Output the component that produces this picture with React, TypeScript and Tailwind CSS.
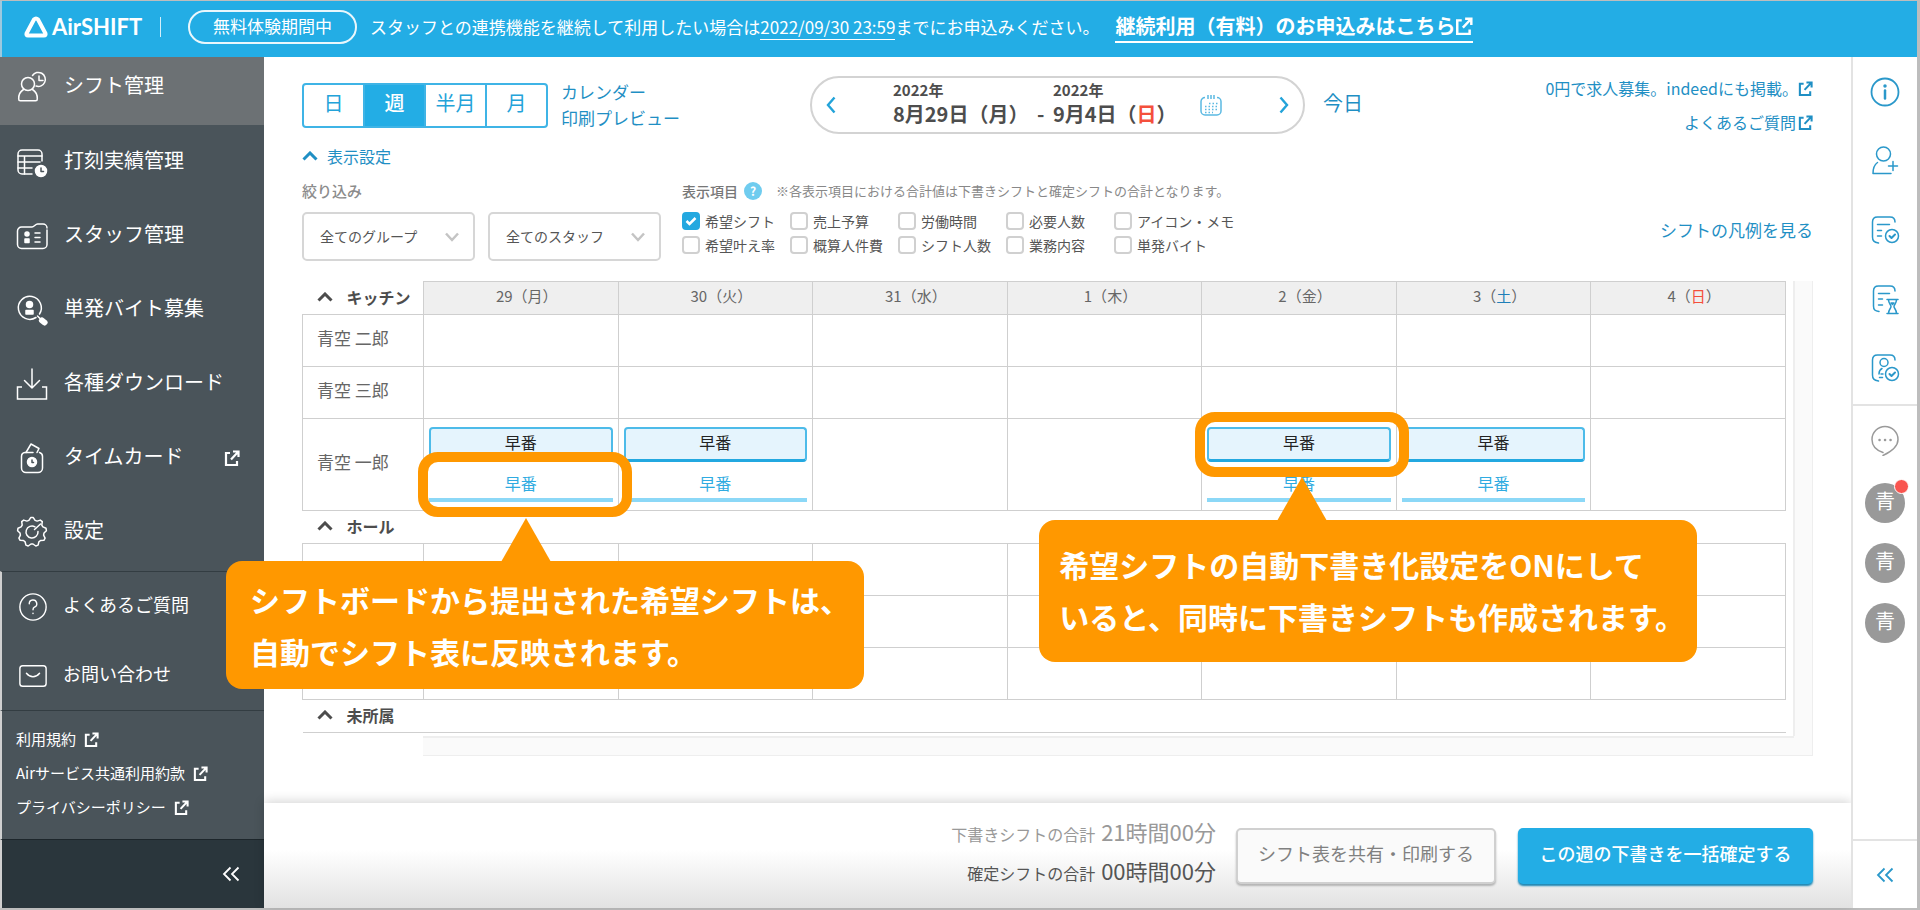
import { ReactNode } from 'react';

interface IconProps {
  className?: string;
}

interface SvgProps extends IconProps {
  children: ReactNode;
  size?: number;
}

function Svg({ children, className = '', size = 32 }: SvgProps) {
  return (
    <svg
      width={size}
      height={size}
      viewBox="0 0 32 32"
      fill="none"
      stroke="currentColor"
      strokeWidth="1.5"
      strokeLinecap="round"
      strokeLinejoin="round"
      className={`shrink-0 ${className}`}
      aria-hidden="true"
    >
      {children}
    </svg>
  );
}

function ExternalIcon({ className = '' }: IconProps) {
  return (
    <svg
      viewBox="0 0 16 16"
      fill="none"
      stroke="currentColor"
      strokeWidth="2.2"
      className={`shrink-0 ${className}`}
      aria-hidden="true"
    >
      <path d="M6 3H2v12h11v-4" />
      <path d="M9 1.5h5.5V7M14 2L7 9.500" />
    </svg>
  );
}

function ChevronUp({ className = '' }: IconProps) {
  return (
    <svg viewBox="0 0 16 10" fill="none" stroke="currentColor" strokeWidth="3" className={className} aria-hidden="true">
      <path d="M1.5 8.5L8 2l6.500 6.500" />
    </svg>
  );
}

function DoubleChevron({ className = '' }: IconProps) {
  return (
    <svg
      width="18"
      height="16"
      viewBox="0 0 18 16"
      fill="none"
      stroke="currentColor"
      strokeWidth="1.8"
      className={className}
      aria-hidden="true"
    >
      <path d="M8.500 1.500L2 8l6.500 6.500M16.500 1.500L10 8l6.500 6.500" />
    </svg>
  );
}

const ShiftIcon = () => (
  <Svg>
    <circle cx="12" cy="13" r="6.500" />
    <path d="M7.500 18.500c-4 2.500-5 6-4.800 9.500 0 1.200.5 1.800 1.600 1.800h15.400c1.100 0 1.600-.6 1.600-1.800.2-3.500-.8-7-4.800-9.500" />
    <path d="M16.500 4.500A7 7 0 1 1 20 15" />
    <path d="M23 5v4.500h4" />
  </Svg>
);

const RecordIcon = () => (
  <Svg>
    <path d="M16 28H6a4 4 0 0 1-4-4V8a4 4 0 0 1 4-4h16a4 4 0 0 1 4 4v7" />
    <path d="M2 10h24M2 16h22M2 22h14M8.500 10v18" />
    <circle cx="25" cy="25" r="5.500" fill="currentColor" />
    <path d="M25 22v3.500h2.500" stroke="#4a545a" />
  </Svg>
);

const StaffIcon = () => (
  <Svg>
    <path d="M31 10v14.500a4 4 0 0 1-4 4H5.500a4 4 0 0 1-4-4V11a4 4 0 0 1 4-4H16c2 0 3.500-3 5.500-3H27a4 4 0 0 1 4 4" />
    <circle cx="11" cy="14" r="2" fill="currentColor" />
    <path d="M9 19h4v3.500H9z" fill="currentColor" />
    <path d="M19 13h5M19 17.500h5M19 22h5" />
  </Svg>
);

const RecruitIcon = () => (
  <Svg>
    <path d="M20 23.500A11.500 11.500 0 1 1 23.500 20" />
    <circle cx="13.500" cy="10.500" r="3" fill="currentColor" />
    <path d="M10 16.500h7V20h-7z" fill="currentColor" />
    <path d="M21.500 22l3 3" />
    <path d="M26 26.500l2.500 2" strokeWidth="6" />
  </Svg>
);

const DownloadIcon = () => (
  <Svg>
    <path d="M16 1v19M8.500 12.500L16 20l7.500-7.500" />
    <path d="M6 19H1.500v12h29V19H26" strokeLinecap="butt" strokeLinejoin="miter" />
  </Svg>
);

const TimecardIcon = () => (
  <Svg>
    <path d="M17 10.500H9a4 4 0 0 0-3.500 4V26a4.500 4.500 0 0 0 4.500 4.500h12a4.500 4.500 0 0 0 4.500-4.500V14.500a4 4 0 0 0-3-4" />
    <path d="M10 10.500l5-8.500 8 4.500-2 4" />
    <circle cx="16" cy="20" r="4.500" fill="currentColor" />
    <path d="M16 18v2.500h1.500" stroke="#4a545a" />
  </Svg>
);

const gearTeeth = 9;
const gearPath =
  Array.from({ length: gearTeeth * 4 }, (_, i) => {
    const angle = ((i - 0.5) / (gearTeeth * 4)) * Math.PI * 2 - Math.PI / 2;
    const radius = i % 4 < 2 ? 14.5 : 12;
    const x = 16 + radius * Math.cos(angle);
    const y = 16 + radius * Math.sin(angle);
    return `${i === 0 ? 'M' : 'L'}${x.toFixed(1)} ${y.toFixed(1)}`;
  }).join('') + 'Z';

const SettingsIcon = () => (
  <Svg>
    <path d={gearPath} />
    <path d="M19 10.800a6 6 0 1 0 3 4.700" />
    <path d="M18.500 13.500L24.500 8" />
  </Svg>
);

const HelpIcon = () => (
  <Svg size={30}>
    <circle cx="16" cy="16" r="14" />
    <path d="M12 12.500a4 4 0 1 1 5.500 3.700c-1 .5-1.500 1-1.500 2.800M16 22.500v.5" />
  </Svg>
);

const MailIcon = () => (
  <Svg size={30}>
    <rect x="2" y="5" width="28" height="22" rx="3" />
    <path d="M9 13c4 5 10 5 14 0" />
  </Svg>
);

const InfoIcon = () => (
  <Svg>
    <circle cx="16" cy="16" r="13.500" strokeWidth="1.800" />
    <path d="M16 14.500v8" strokeWidth="2.500" />
    <circle cx="16" cy="10" r="1" fill="currentColor" />
  </Svg>
);

const AddUserIcon = () => (
  <Svg>
    <circle cx="14.500" cy="9" r="7" />
    <path d="M8.500 17.500C5 20 4 24 4 28.500h18M24 16.500v9M19.500 21h9" />
  </Svg>
);

const CheckBadge = () => (
  <>
    <circle cx="23" cy="22" r="6.500" />
    <path d="M20.500 22l2 2 3.500-3.500" strokeWidth="2" />
  </>
);

const DocCheckIcon = () => (
  <Svg>
    <path d="M9.500 29C5 28 3.500 27 3.500 23V8c0-3 2-5 5-5H21c3 0 5 2 5 5" />
    <path d="M8.500 10.500h12M8.500 16.500h4M8.500 22h4" />
    <CheckBadge />
  </Svg>
);

const DocWaitIcon = () => (
  <Svg>
    <path d="M10 28.500C6 28 4.500 27 4.500 23V8c0-3 2-5 5-5H21c3 0 5 2 5 5" />
    <path d="M9.500 10.500h11M9.500 16h4M9.500 22h4" />
    <path d="M18 16.500h11M18 30.500h11M19.500 16.500c0 4 2.500 5 2.500 7s-2.500 3-2.500 7M27.500 16.500c0 4-2.500 5-2.500 7s2.500 3 2.500 7" />
    <path d="M22 20h3l-1.500 1.500z" fill="currentColor" />
  </Svg>
);

const PersonCheckIcon = () => (
  <Svg>
    <path d="M9.500 29C5 28 3.500 27 3.500 23V8c0-3 2-5 5-5H21c3 0 5 2 5 5" />
    <circle cx="15" cy="10.500" r="4" />
    <path d="M13 16.500c-2 1-3 3-3 5.500M10.500 25.500h3M12 22h2" />
    <CheckBadge />
  </Svg>
);

const ChatIcon = () => (
  <Svg>
    <path d="M14 28.500C5 25.500 3 20 3 15.500a13 13 0 0 1 26 0c0 8-7.500 12.500-15 16" />
    <path d="M10.500 16h.1M16 16h.1M21.500 16h.1" strokeWidth="2.500" />
  </Svg>
);

const navItems = [
  { label: 'シフト管理', icon: <ShiftIcon />, active: true },
  { label: '打刻実績管理', icon: <RecordIcon /> },
  { label: 'スタッフ管理', icon: <StaffIcon /> },
  { label: '単発バイト募集', icon: <RecruitIcon /> },
  { label: '各種ダウンロード', icon: <DownloadIcon /> },
  { label: 'タイムカード', icon: <TimecardIcon />, external: true },
  { label: '設定', icon: <SettingsIcon /> },
];

const supportItems = [
  { label: 'よくあるご質問', icon: <HelpIcon /> },
  { label: 'お問い合わせ', icon: <MailIcon /> },
];

const legalItems = ['利用規約', 'Airサービス共通利用約款', 'プライバシーポリシー'];

const viewModes = ['日', '週', '半月', '月'];

const displayOptions = [
  '希望シフト',
  '売上予算',
  '労働時間',
  '必要人数',
  'アイコン・メモ',
  '希望叶え率',
  '概算人件費',
  'シフト人数',
  '業務内容',
  '単発バイト',
];

const days = [
  { date: '29', weekday: '月' },
  { date: '30', weekday: '火' },
  { date: '31', weekday: '水' },
  { date: '1', weekday: '木' },
  { date: '2', weekday: '金' },
  { date: '3', weekday: '土', color: 'text-[#1f7fb8]' },
  { date: '4', weekday: '日', color: 'text-[#f4503c]' },
];

const shiftDays = ['29', '30', '2', '3'];

function Header() {
  return (
    <header className="h-14 flex items-center bg-[#23ade5] text-white border-l-2 border-[#9cc9df] pl-[22px] pb-1 text-[17px] whitespace-nowrap">
      <a href="#" className="flex items-center gap-1">
        <svg width="24" height="22" viewBox="0 0 24 22" fill="none" stroke="currentColor" strokeWidth="4" strokeLinejoin="round" aria-hidden="true">
          <path d="M10 3.500Q12 1.500 14 3.500L21.500 17.500Q22 19.500 20 19.500H4Q2 19.500 2.500 17.500Z" />
        </svg>
        <span className="w-[90px] text-[22px] leading-6 font-bold font-['Lato',sans-serif]">AirSHIFT</span>
      </a>
      <span className="w-px h-5 bg-white/80 ml-[18px]" />
      <span className="ml-[27px] h-[34px] px-[23px] pb-0.5 flex items-center rounded-full border-2 border-white/90">
        無料体験期間中
      </span>
      <p className="ml-[13px]">
        スタッフとの連携機能を継続して利用したい場合は
        <span className="border-b border-white">2022/09/30 23:59</span>
        までにお申込みください。
      </p>
      <a href="#" className="ml-4 flex items-center font-bold text-xl leading-[30px] border-b-2 border-white">
        継続利用（有料）のお申込みはこちら
        <ExternalIcon className="size-[18px]" />
      </a>
    </header>
  );
}

function Sidebar() {
  return (
    <aside className="w-[264px] shrink-0 flex flex-col bg-[#4a545a] text-white">
      <nav className="pb-0.5">
        {navItems.map((item) => (
          <a
            key={item.label}
            href="#"
            className={
              item.active
                ? 'h-[68px] pb-2 pl-4 pr-6 flex items-center gap-4 bg-[#6c7174]'
                : 'h-[74px] pl-4 pr-6 flex items-center gap-4'
            }
          >
            {item.icon}
            <span className="pb-1 text-xl">{item.label}</span>
            {item.external && <ExternalIcon className="ml-auto size-4" />}
          </a>
        ))}
      </nav>
      <div className="border-l-2 border-l-[#d0d0d0] border-t border-t-[#333d42] pl-4">
        {supportItems.map((item) => (
          <a key={item.label} href="#" className="h-[69px] flex items-center gap-[15px]">
            {item.icon}
            <span className="pb-1.5 text-lg">{item.label}</span>
          </a>
        ))}
      </div>
      <div className="h-[129px] border-l-2 border-l-[#d0d0d0] border-t border-t-[#333d42] pl-3.5 pt-[11px]">
        {legalItems.map((label) => (
          <a key={label} href="#" className="h-[34px] flex items-center gap-2 text-[15px]">
            {label}
            <ExternalIcon className="size-[15px]" />
          </a>
        ))}
      </div>
      <div className="flex-1 flex items-center justify-end border-l-2 border-l-[#d0d0d0] border-t border-t-[#1d262b] bg-[#2a363c] pr-6">
        <button type="button" aria-label="メニューを閉じる">
          <DoubleChevron />
        </button>
      </div>
    </aside>
  );
}

function Toolbar() {
  return (
    <div className="h-[58px] flex items-center text-[#1f8fc4] whitespace-nowrap">
      <div className="w-[246px] h-[45px] flex rounded border-2 border-[#3fb4e6] overflow-hidden divide-x-2 divide-[#3fb4e6]">
        {viewModes.map((mode) => (
          <button
            key={mode}
            type="button"
            className={
              mode === '週'
                ? 'flex-1 basis-0 pb-1 text-xl bg-[#23ade5] text-white font-medium'
                : 'flex-1 basis-0 pb-1 text-xl text-[#23a3d9]'
            }
          >
            {mode}
          </button>
        ))}
      </div>
      <div className="ml-[13px] flex flex-col text-[17px] leading-[26px]">
        <a href="#">カレンダー</a>
        <a href="#">印刷プレビュー</a>
      </div>
      <div className="ml-[130px] w-[495px] h-[58px] flex items-center rounded-full border-2 border-[#d3d3d3] pl-3.5 pr-3.5 text-[#4d4d4d] font-bold">
        <button type="button" aria-label="前の週" className="text-[#23a3d9]">
          <svg width="10" height="18" viewBox="0 0 10 18" fill="none" stroke="currentColor" strokeWidth="2.400">
            <path d="M8.500 1.500L2 9l6.500 7.500" />
          </svg>
        </button>
        <div className="ml-[57px] pb-0.5 flex items-end">
          <div className="w-36">
            <div className="text-[15px] leading-5">2022年</div>
            <div className="text-xl leading-7">8月29日（月）</div>
          </div>
          <div className="w-4 text-xl leading-7">-</div>
          <div>
            <div className="text-[15px] leading-5">2022年</div>
            <div className="text-xl leading-7">
              9月4日（<span className="text-[#f4503c]">日</span>）
            </div>
          </div>
        </div>
        <button type="button" aria-label="カレンダーを開く" className="ml-auto text-[#5bb9e2]">
          <svg width="22" height="22" viewBox="0 0 22 22" fill="none" stroke="currentColor" strokeWidth="1.500">
            <path d="M5 3.500a4 4 0 0 0-4 4V17a4 4 0 0 0 4 4h12a4 4 0 0 0 4-4V7.500a4 4 0 0 0-4-4" />
            <path d="M8 1v4M11 1v4M14 1v4" />
            <path d="M9 9.500h9M5 12.500h13M5 15.500h13M5 18.500h8" strokeDasharray="1.500 2" />
          </svg>
        </button>
        <button type="button" aria-label="次の週" className="ml-[57px] text-[#23a3d9]">
          <svg width="10" height="18" viewBox="0 0 10 18" fill="none" stroke="currentColor" strokeWidth="2.400">
            <path d="M1.500 1.500L8 9l-6.500 7.500" />
          </svg>
        </button>
      </div>
      <button type="button" className="ml-[18px] pb-1 text-xl">
        今日
      </button>
      <div className="ml-auto flex flex-col items-end text-base leading-[34px]">
        <a href="#" className="flex items-center">
          0円で求人募集。indeedにも掲載。
          <ExternalIcon className="size-[15px]" />
        </a>
        <a href="#" className="flex items-center">
          よくあるご質問
          <ExternalIcon className="ml-0.5 size-[15px]" />
        </a>
      </div>
    </div>
  );
}

function FilterSelect({ id, label }: { id: string; label: string }) {
  return (
    <div className="relative">
      <select
        id={id}
        aria-label={label}
        className="w-[173px] h-[49px] appearance-none rounded-[5px] border-2 border-[#d6d6d6] bg-white pl-4 pb-0.5 text-sm text-[#555]"
      >
        <option>{label}</option>
      </select>
      <svg
        width="14"
        height="10"
        viewBox="0 0 14 10"
        fill="none"
        stroke="#c4c4c4"
        strokeWidth="2.500"
        className="absolute right-4 top-5 pointer-events-none"
        aria-hidden="true"
      >
        <path d="M1 1.500l6 6.500 6-6.500" />
      </svg>
    </div>
  );
}

function Filters() {
  return (
    <div className="mt-3 flex text-[#555] whitespace-nowrap">
      <div>
        <div className="text-[15px] leading-5 font-medium text-[#8c8c8c]">絞り込み</div>
        <div className="mt-[11px] flex gap-[13px]">
          <FilterSelect id="group" label="全てのグループ" />
          <FilterSelect id="staff" label="全てのスタッフ" />
        </div>
      </div>
      <div className="ml-[21px]">
        <div className="flex items-center text-sm leading-5 text-[#777]">
          <span className="font-medium">表示項目</span>
          <button
            type="button"
            aria-label="ヘルプ"
            className="ml-1.5 size-[18px] flex items-center justify-center rounded-full bg-[#6fccef] text-white text-xs font-bold"
          >
            ?
          </button>
          <span className="ml-3.5 text-[13px] text-[#888]">
            ※各表示項目における合計値は下書きシフトと確定シフトの合計となります。
          </span>
        </div>
        <div className="mt-[11px] grid grid-cols-[108px_108px_108px_108px_auto] gap-y-1.5">
          {displayOptions.map((option, i) => (
            <label key={option} className="relative h-[18px] flex items-center text-sm leading-[18px]">
              <input
                type="checkbox"
                defaultChecked={i === 0}
                className="peer size-[18px] mr-[5px] appearance-none rounded-[4px] border-2 border-[#d0d0d0] bg-white checked:bg-[#23a8e0] checked:border-[#23a8e0]"
              />
              <svg
                width="18"
                height="18"
                viewBox="0 0 18 18"
                fill="none"
                stroke="white"
                strokeWidth="2.500"
                className="absolute left-0 hidden peer-checked:block pointer-events-none"
                aria-hidden="true"
              >
                <path d="M4.500 9l3 3 6-6" />
              </svg>
              {option}
            </label>
          ))}
        </div>
      </div>
      <a href="#" className="ml-auto mt-9 text-[17px] text-[#1f8fc4]">
        シフトの凡例を見る
      </a>
    </div>
  );
}

interface CalloutProps {
  ring: string;
  arrow: string;
  box: string;
  children: ReactNode;
}

function Callout({ ring, arrow, box, children }: CalloutProps) {
  return (
    <>
      <span className={`absolute z-20 w-[214px] h-[65px] rounded-[20px] border-10 border-[#ff9800] ${ring}`} />
      <svg width="50" height="44" viewBox="0 0 50 44" fill="#ff9800" className={`absolute z-20 ${arrow}`} aria-hidden="true">
        <path d="M25 0l25 44H0z" />
      </svg>
      <p
        className={`absolute z-20 rounded-2xl bg-[#ff9800] text-left text-[30px] leading-[52px] font-bold text-white whitespace-nowrap ${box}`}
      >
        {children}
      </p>
    </>
  );
}

function ShiftCell({ date }: { date: string }) {
  return (
    <div className="relative flex flex-col items-stretch text-center text-base">
      <button
        type="button"
        className="h-[35px] pb-1 rounded border-2 border-b-3 border-[#4dbbe9] border-b-[#23a8e0] bg-[#e5f4fd] leading-6 text-[#222]"
      >
        早番
      </button>
      <button type="button" className="mt-2 h-8 pb-0.5 border-b-4 border-[#8cd8f7] text-[#2fabe1] leading-6">
        早番
      </button>
      {date === '29' && (
        <Callout
          ring="top-[25px] -left-[11px]"
          arrow="top-[91px] left-[72px]"
          box="top-[134px] -left-[203px] py-3 pl-6 pr-3.5"
        >
          シフトボードから提出された希望シフトは、
          <br />
          自動でシフト表に反映されます。
        </Callout>
      )}
      {date === '2' && (
        <Callout
          ring="-top-[15px] -left-[12px]"
          arrow="top-[50px] left-[70px]"
          box="top-[93px] -left-[168px] pt-[18px] pb-5 pl-5 pr-3"
        >
          希望シフトの自動下書き化設定をONにして
          <br />
          いると、同時に下書きシフトも作成されます。
        </Callout>
      )}
    </div>
  );
}

function GroupName({ name }: { name: string }) {
  return (
    <button type="button" aria-expanded="true" className="h-[32px] pb-0.5 pl-3.5 flex items-center gap-3.5 text-base font-bold text-[#4d4d4d]">
      <ChevronUp className="w-4 h-2.5" />
      {name}
    </button>
  );
}

function StaffRow({ name = '', shifts = [] }: { name?: string; shifts?: string[] }) {
  return (
    <tr className={shifts.length > 0 ? 'h-[92px]' : 'h-[52px]'}>
      <th scope="row" className="border border-[#cfcfcf] pl-3.5 pb-1.5 text-left text-[17px] font-normal">
        {name}
      </th>
      {days.map((day) => (
        <td key={day.date} className="border border-[#cfcfcf] px-[5px] py-0 align-middle">
          {shifts.includes(day.date) && <ShiftCell date={day.date} />}
        </td>
      ))}
    </tr>
  );
}

function ShiftTable() {
  return (
    <div className="mt-5 text-[#666]">
      <div className="flex">
        <div className="flex-1 pr-[7px] pb-[3px]">
          <table className="w-full table-fixed border-collapse">
            <thead>
              <tr className="h-[33px]">
                <th className="w-[121px] text-left">
                  <GroupName name="キッチン" />
                </th>
                {days.map((day) => (
                  <th
                    key={day.date}
                    scope="col"
                    className="border border-[#cfcfcf] bg-[#efefef] pl-3 pb-1 text-[15px] leading-5 font-normal"
                  >
                    {day.date}（<span className={day.color}>{day.weekday}</span>）
                  </th>
                ))}
              </tr>
            </thead>
            <tbody>
              <StaffRow name="青空 二郎" />
              <StaffRow name="青空 三郎" />
              <StaffRow name="青空 一郎" shifts={shiftDays} />
              <tr>
                <th colSpan={8} className="text-left">
                  <GroupName name="ホール" />
                </th>
              </tr>
              <StaffRow />
              <StaffRow />
              <StaffRow />
              <tr>
                <th colSpan={8} className="border-b border-[#cfcfcf] text-left">
                  <GroupName name="未所属" />
                </th>
              </tr>
            </tbody>
          </table>
        </div>
        <div className="w-5 border-l-2 border-r border-[#eee] bg-[#fafafa]" />
      </div>
      <div className="ml-[121px] h-5 flex border-b border-r border-[#eee] bg-[#fafafa]">
        <div className="flex-1 border-t-2 border-[#eee]" />
        <div className="w-[18px]" />
      </div>
    </div>
  );
}

function FooterBar() {
  return (
    <footer className="mt-auto h-[105px] flex items-center justify-end pr-[38px] bg-linear-to-b from-white from-45% to-[#e2e2e2] shadow-[0_-2px_10px_rgba(0,0,0,0.16)] whitespace-nowrap">
      <dl className="pb-2 grid grid-cols-[auto_auto] items-baseline justify-items-end gap-x-1.5 text-base leading-9">
        <dt className="text-[#999]">下書きシフトの合計</dt>
        <dd className="text-[22px] text-[#999]">21時間00分</dd>
        <dt className="text-[#555]">確定シフトの合計</dt>
        <dd className="text-[22px] text-[#555]">00時間00分</dd>
      </dl>
      <button
        type="button"
        className="ml-5 w-[260px] h-14 rounded-[5px] border-2 border-[#d0d0d0] bg-[#fafafa] pb-1.5 text-lg text-[#808080] shadow-[0_2px_2px_#b5b5b5]"
      >
        シフト表を共有・印刷する
      </button>
      <button
        type="button"
        className="ml-[22px] w-[295px] h-14 rounded-[5px] bg-[#23ade5] pb-1.5 text-lg font-medium text-white shadow-[0_2px_2px_#1c86b3]"
      >
        この週の下書きを一括確定する
      </button>
    </footer>
  );
}

function Rail() {
  const tools = [
    { label: 'お知らせ', icon: <InfoIcon /> },
    { label: 'スタッフ追加', icon: <AddUserIcon /> },
    { label: '確定シフト', icon: <DocCheckIcon /> },
    { label: '未提出', icon: <DocWaitIcon /> },
    { label: '承認', icon: <PersonCheckIcon /> },
  ];
  return (
    <aside className="w-[66px] shrink-0 flex flex-col items-stretch border-l-2 border-[#e3e3e3] bg-white text-[#2a98ca]">
      <div className="pb-0.5 flex flex-col border-b-2 border-[#e3e3e3]">
        {tools.map((tool) => (
          <button key={tool.label} type="button" aria-label={tool.label} className="h-[69px] flex items-center justify-center">
            {tool.icon}
          </button>
        ))}
      </div>
      <button type="button" aria-label="チャット" className="h-[67px] flex items-center justify-center text-[#9a9a9a]">
        <ChatIcon />
      </button>
      {[0, 1, 2].map((i) => (
        <div key={i} className="h-[60px] flex items-center justify-center">
          <button type="button" className="relative size-10 pb-1 rounded-full bg-[#999] text-xl leading-9 text-white">
            青
            {i === 0 && <span className="absolute -top-1 -right-1 size-[15px] rounded-full border border-white bg-[#f9554f]" />}
          </button>
        </div>
      ))}
      <div className="mt-auto h-[69px] flex items-center justify-center border-t-2 border-[#e3e3e3]">
        <button type="button" aria-label="パネルを開く">
          <DoubleChevron />
        </button>
      </div>
    </aside>
  );
}

export default function App() {
  return (
    <div
      lang="ja"
      className="min-h-screen flex flex-col bg-white border-t border-b-2 border-r-3 border-[#bdbdbd] font-['Noto_Sans_CJK_JP',sans-serif]"
    >
      <Header />
      <div className="flex-1 flex">
        <Sidebar />
        <main className="flex-1 min-w-0 flex flex-col">
          <div className="px-[38px] pt-[19px] pb-11">
            <Toolbar />
            <button type="button" className="mt-2 h-[27px] flex items-center gap-[9px] text-base text-[#1f8fc4]">
              <ChevronUp className="w-4 h-2.5" />
              表示設定
            </button>
            <Filters />
            <ShiftTable />
          </div>
          <FooterBar />
        </main>
        <Rail />
      </div>
    </div>
  );
}
